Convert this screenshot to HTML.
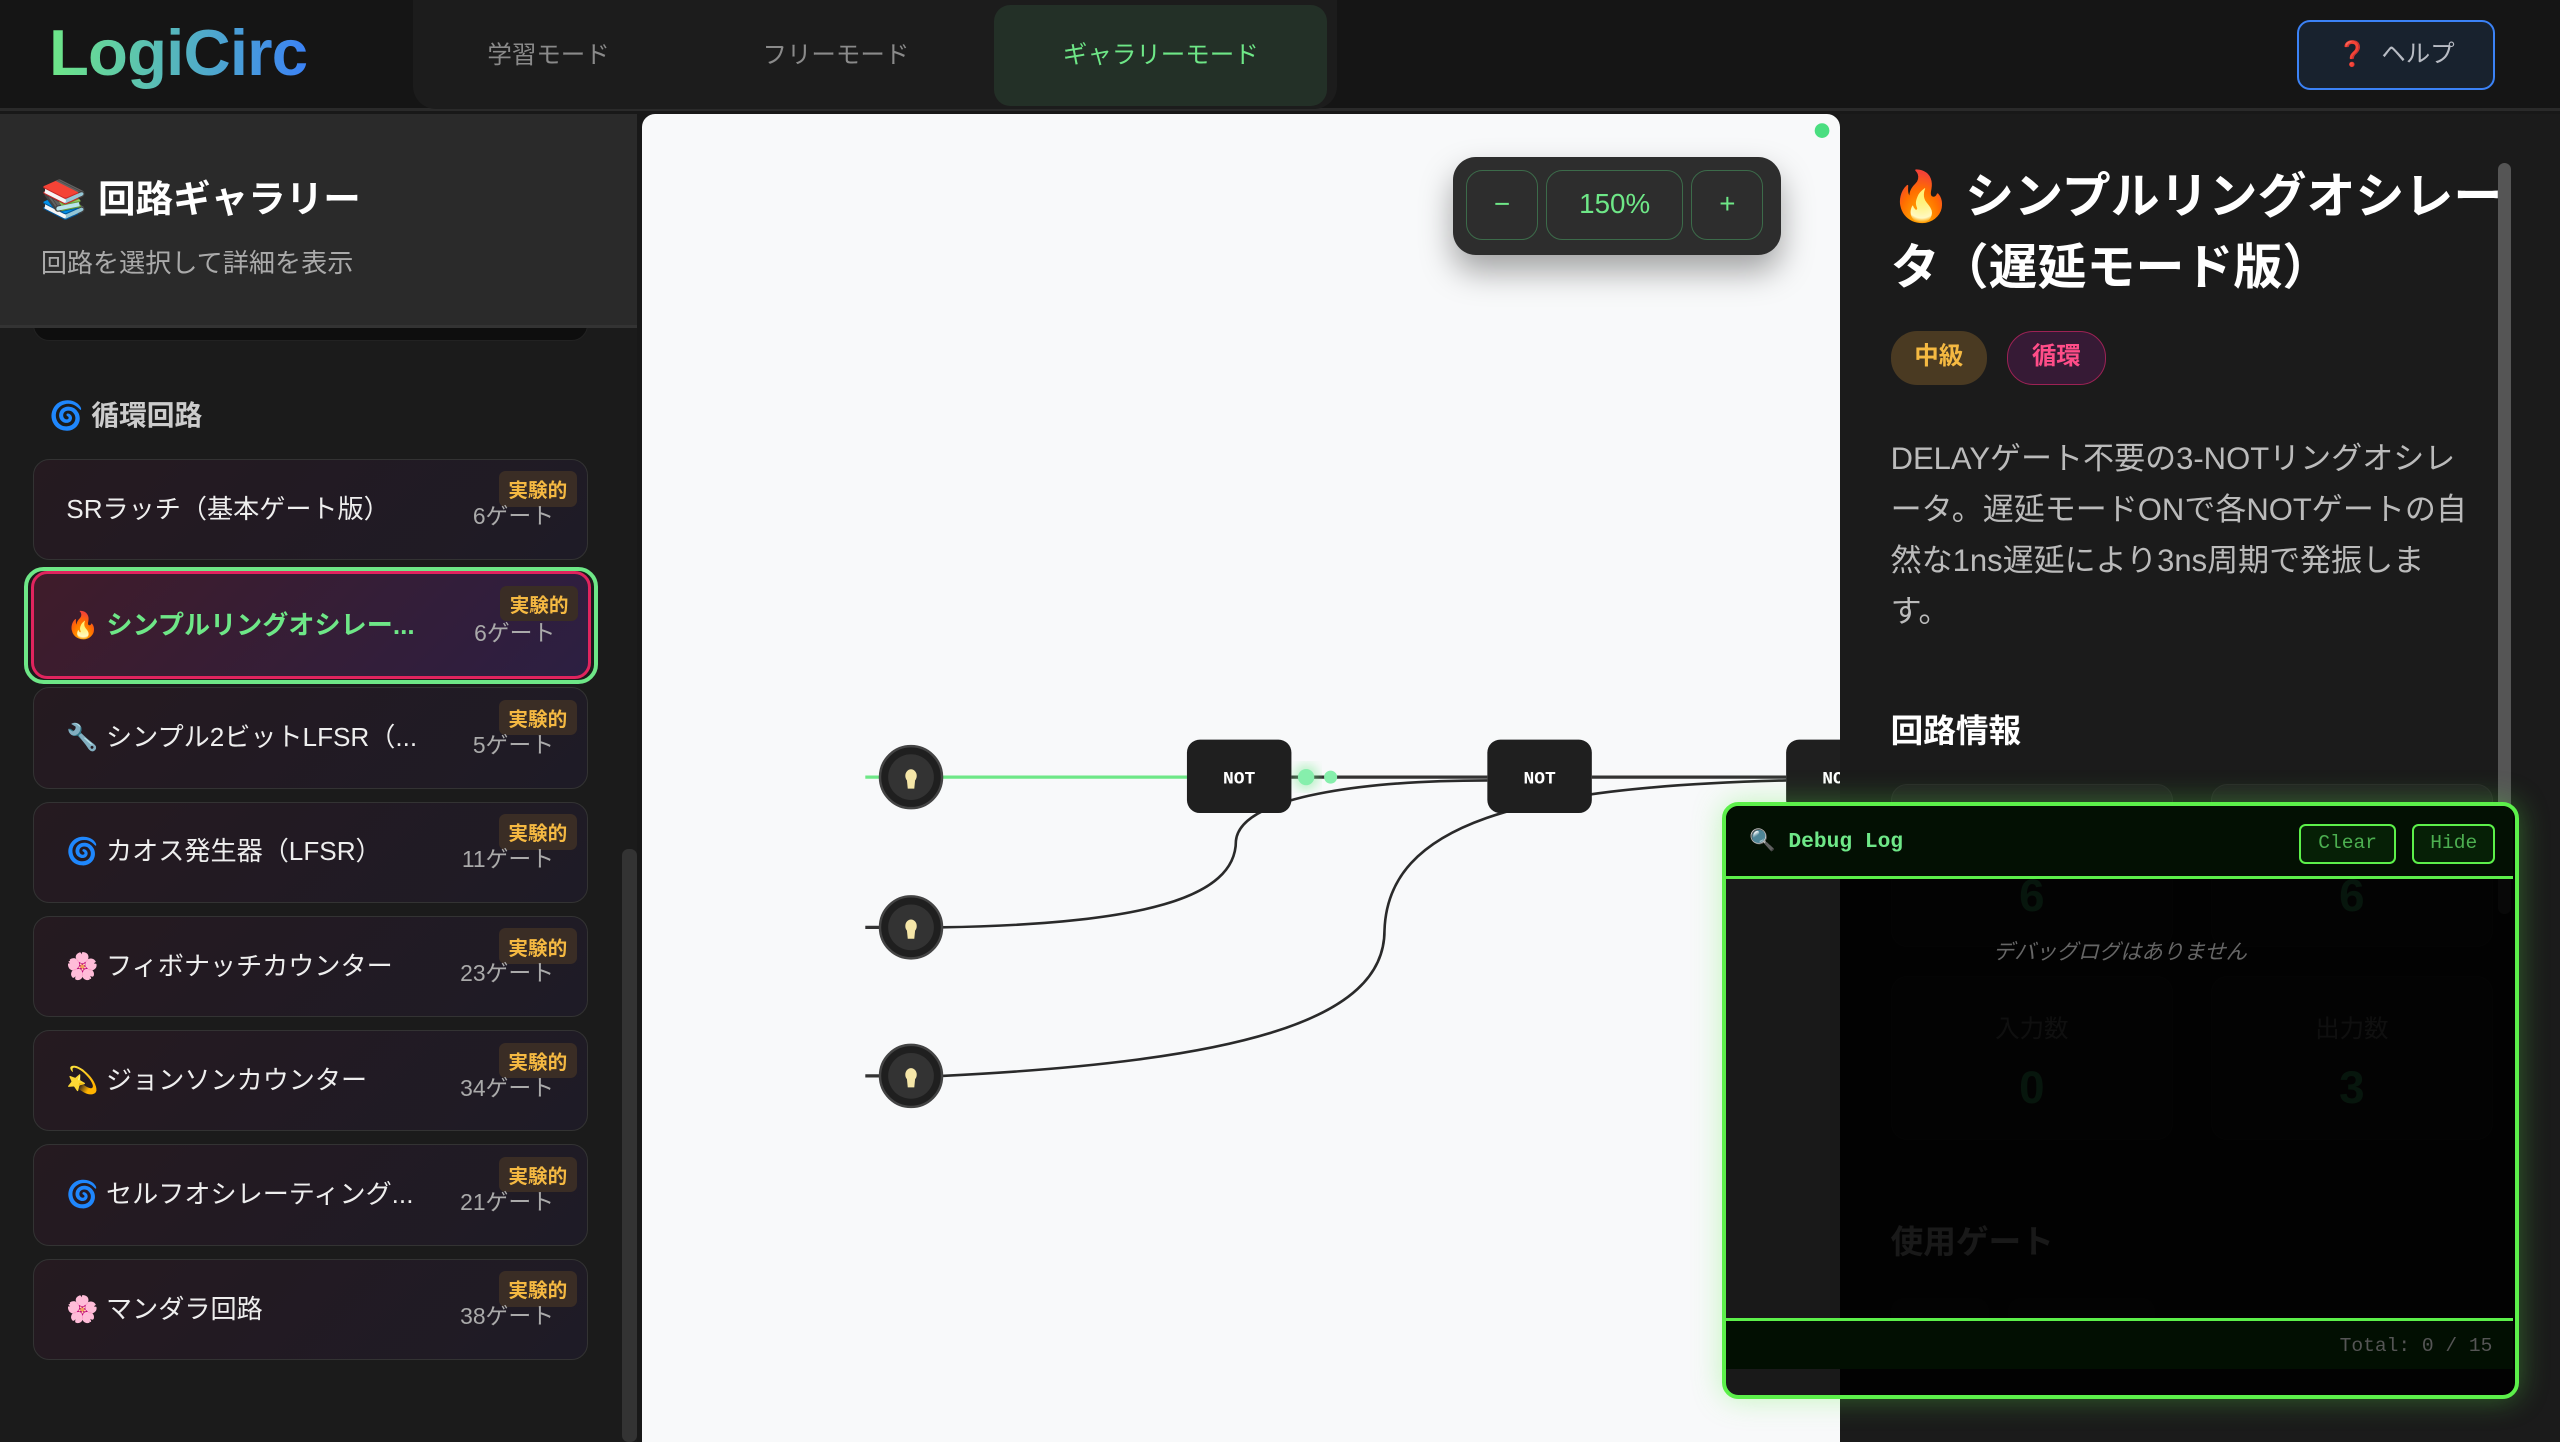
<!DOCTYPE html>
<html><head><meta charset="utf-8">
<style>
html{zoom:1.63265}
*{box-sizing:border-box;margin:0;padding:0}
body{width:1568px;height:883px;overflow:hidden;background:#181818;font-family:"Liberation Sans","Noto Sans CJK JP",sans-serif;position:relative;color:#fff}
.abs{position:absolute}
.header{left:0;top:0;width:1568px;height:68px;background:#151515;border-bottom:2px solid #2a2a2a}
.logo{left:30px;top:9px;font-size:40px;font-weight:bold;letter-spacing:-0.5px;background:linear-gradient(90deg,#6ee787,#3b82f6);-webkit-background-clip:text;color:transparent}
.nav{left:253px;top:0;width:566px;height:67px;background:#1c1c1c;border-radius:0 0 14px 14px}
.tab{top:3px;height:62px;line-height:62px;font-size:15px;color:#8a8a8a;text-align:center}
.help{left:1407px;top:12px;width:121px;height:43px;border:1.5px solid #3b82f6;border-radius:8px;background:#18222e;color:#b8bcc4;font-size:15px;text-align:center;line-height:40px}
.side{left:0;top:70px;width:390px;height:813px;background:#1b1b1b}
.card{left:20px;width:340px;height:62px;border:1px solid #333;border-radius:10px;background:linear-gradient(135deg,#251a20,#1e1b26)}
.card .t{position:absolute;left:20px;top:17px;font-size:16px;color:#eee;white-space:nowrap}
.card .b{position:absolute;right:6px;top:7px;background:#3a2d25;color:#f5b942;font-size:12px;font-weight:bold;padding:2px 6px;border-radius:4px}
.card .g{position:absolute;right:20px;top:23px;font-size:14px;color:#aaa}
.canvas{left:393px;top:70px;width:734px;height:813px;background:#f8f9fa;border-radius:8px 8px 0 0}
.zb{top:8px;height:43px;border:1px solid #3c6b4a;border-radius:10px;color:#6ee787;text-align:center;line-height:41px;font-size:17px}
.right{left:1127px;top:70px;width:441px;height:813px;background:#1b1b1b}
.st{position:absolute;width:173px;height:100px;border:1px solid #2a2a2a;border-radius:10px;background:#222}
.st .l{position:absolute;width:100%;text-align:center;top:20px;font-size:15px;color:#999}
.st .v{position:absolute;width:100%;text-align:center;top:52px;font-size:28px;font-weight:bold;color:#4ade80}
.mono{font-family:"Liberation Mono",monospace}
</style></head><body>
<div class="abs header"></div>
<div class="abs logo">LogiCirc</div>
<div class="abs nav"></div>
<div class="abs tab" style="left:270px;width:132px">学習モード</div>
<div class="abs tab" style="left:440px;width:144px">フリーモード</div>
<div class="abs tab" style="left:609px;width:204px;background:#233027;border-radius:10px;color:#6ee787">ギャラリーモード</div>
<div class="abs help"><span style="color:#e0245e">❓</span>&nbsp; ヘルプ</div>

<div class="abs side"></div>
<div class="abs" style="left:20px;top:180px;width:340px;height:29px;background:#0e0e0e;border-radius:0 0 10px 10px;border:1px solid #222"></div>
<div class="abs" style="left:0;top:70px;width:390px;height:131px;background:#2a2a2a;border-bottom:2px solid #333"></div>
<div class="abs" style="left:25px;top:103px;font-size:23px;font-weight:bold">📚 回路ギャラリー</div>
<div class="abs" style="left:25px;top:148px;font-size:16px;color:#aaa">回路を選択して詳細を表示</div>
<div class="abs" style="left:381px;top:520px;width:9px;height:363px;background:#333;border-radius:4px"></div>
<div class="abs" style="left:30px;top:241px;font-size:17px;font-weight:bold;color:#ccc">🌀 循環回路</div>

<div class="abs card" style="top:281px"><div class="t">SRラッチ（基本ゲート版）</div><div class="b">実験的</div><div class="g">6ゲート</div></div>
<div class="abs" style="left:15px;top:347px;width:351px;height:72px;border:3px solid #6ee787;border-radius:12px"></div>
<div class="abs card" style="top:350px;left:19px;width:343px;height:66px;border:2px solid #e0245e;background:linear-gradient(135deg,#3f1c2a,#2c1f42)"><div class="t" style="color:#6ee787;font-weight:bold;top:18px">🔥 シンプルリングオシレー...</div><div class="b">実験的</div><div class="g" style="top:24px">6ゲート</div></div>
<div class="abs card" style="top:421px"><div class="t">🔧 シンプル2ビットLFSR（...</div><div class="b">実験的</div><div class="g">5ゲート</div></div>
<div class="abs card" style="top:491px"><div class="t">🌀 カオス発生器（LFSR）</div><div class="b">実験的</div><div class="g">11ゲート</div></div>
<div class="abs card" style="top:561px"><div class="t">🌸 フィボナッチカウンター</div><div class="b">実験的</div><div class="g">23ゲート</div></div>
<div class="abs card" style="top:631px"><div class="t">💫 ジョンソンカウンター</div><div class="b">実験的</div><div class="g">34ゲート</div></div>
<div class="abs card" style="top:701px"><div class="t">🌀 セルフオシレーティング...</div><div class="b">実験的</div><div class="g">21ゲート</div></div>
<div class="abs card" style="top:771px"><div class="t">🌸 マンダラ回路</div><div class="b">実験的</div><div class="g">38ゲート</div></div>

<div class="abs canvas"></div>
<svg class="abs" style="left:0;top:0" width="1127" height="883">
<defs><filter id="gl"><feGaussianBlur stdDeviation="3"/></filter></defs>
<line x1="530" y1="476" x2="727" y2="476" stroke="#6ee787" stroke-width="6" opacity="0.4" filter="url(#gl)"/>
<line x1="530" y1="476" x2="727" y2="476" stroke="#6ee787" stroke-width="2"/>
<line x1="530" y1="568" x2="540" y2="568" stroke="#333" stroke-width="2"/>
<line x1="530" y1="659" x2="540" y2="659" stroke="#333" stroke-width="2"/>
<line x1="791" y1="476" x2="911" y2="476" stroke="#333" stroke-width="2"/>
<line x1="975" y1="476" x2="1094" y2="476" stroke="#333" stroke-width="2"/>
<path d="M577,568 C700,566 757,550 757,515 C760,485 850,478 911,478" fill="none" stroke="#2a2a2a" stroke-width="1.6"/>
<path d="M577,659 C760,650 848,625 848,570 C850,505 930,482 1094,478" fill="none" stroke="#2a2a2a" stroke-width="1.6"/>
<circle cx="800" cy="476" r="8" fill="#6ee787" opacity="0.4" filter="url(#gl)"/>
<circle cx="800" cy="476" r="5" fill="#86efac"/>
<circle cx="815" cy="476" r="4" fill="#86efac"/>
<g id="in">
<circle cx="558" cy="476" r="19" fill="#1f1f1f" stroke="#444" stroke-width="1.5"/>
<circle cx="558" cy="476" r="14" fill="#333"/>
<path d="M555.5,478 a3.5,4 0 1 1 5,0 l-0.5,5 h-4 z" fill="#f5e6a8"/>
</g>
<use href="#in" y="92"/><use href="#in" y="183"/>
<g font-family="Liberation Mono,monospace" font-weight="bold" font-size="11" fill="#fff" text-anchor="middle">
<rect x="727" y="453" width="64" height="45" rx="8" fill="#1f1f1f"/><text x="759" y="480">NOT</text>
<rect x="911" y="453" width="64" height="45" rx="8" fill="#1f1f1f"/><text x="943" y="480">NOT</text>
<rect x="1094" y="453" width="64" height="45" rx="8" fill="#1f1f1f"/><text x="1126" y="480">NOT</text>
</g>
<circle cx="1116" cy="80" r="4.5" fill="#4ade80"/>
</svg>
<div class="abs" style="left:890px;top:96px;width:201px;height:60px;background:#2d2d2d;border-radius:14px;box-shadow:0 10px 20px rgba(0,0,0,0.35)">
<div class="abs zb" style="left:8px;width:44px">−</div>
<div class="abs zb" style="left:57px;width:84px">150%</div>
<div class="abs zb" style="left:146px;width:44px">+</div>
</div>

<div class="abs right"></div>
<div class="abs" style="left:1530px;top:100px;width:8px;height:460px;background:#555;border-radius:4px"></div>
<div class="abs" style="left:1158px;top:99px;width:400px;font-size:30px;font-weight:bold;line-height:44px;white-space:nowrap">🔥 シンプルリングオシレー<br>タ（遅延モード版）</div>
<div class="abs" style="left:1158px;top:203px;width:59px;height:33px;background:#4a3a22;border-radius:16px;color:#f5b942;font-size:15px;font-weight:bold;text-align:center;line-height:32px">中級</div>
<div class="abs" style="left:1229px;top:203px;width:61px;height:33px;background:#361a35;border:1px solid #9d2255;border-radius:16px;color:#ff4d88;font-size:15px;font-weight:bold;text-align:center;line-height:31px">循環</div>
<div class="abs" style="left:1158px;top:265px;width:362px;font-size:19px;line-height:31.3px;color:#bbb">DELAYゲート不要の3-NOTリングオシレータ。遅延モードONで各NOTゲートの自然な1ns遅延により3ns周期で発振します。</div>
<div class="abs" style="left:1158px;top:432px;font-size:20px;font-weight:bold">回路情報</div>
<div class="st" style="left:1158px;top:480px"><div class="l">ゲート数</div><div class="v">6</div></div>
<div class="st" style="left:1354px;top:480px"><div class="l">ワイヤ数</div><div class="v">6</div></div>
<div class="st" style="left:1158px;top:598px"><div class="l">入力数</div><div class="v">0</div></div>
<div class="st" style="left:1354px;top:598px"><div class="l">出力数</div><div class="v">3</div></div>
<div class="abs" style="left:1158px;top:745px;font-size:20px;font-weight:bold">使用ゲート</div>
<div class="abs" style="left:1158px;top:795px;width:60px;height:40px;background:#222;border-radius:8px"></div>
<div class="abs" style="left:1230px;top:795px;width:90px;height:40px;background:#222;border-radius:8px"></div>

<div class="abs" style="left:1055px;top:491px;width:488px;height:366px;border:3px solid #5cf04a;border-radius:10px;background:rgba(0,0,0,0.9);box-shadow:0 0 18px rgba(92,240,74,0.35);overflow:hidden">
<div class="abs" style="left:0;top:0;width:482px;height:45px;background:#031003;border-bottom:2px solid #5cf04a"></div>
<div class="abs mono" style="left:14px;top:14px;font-size:13px;font-weight:bold;color:#6ee787">🔍 Debug Log</div>
<div class="abs mono" style="left:351px;top:11px;width:59px;height:25px;border:1.5px solid #5cf04a;border-radius:4px;color:#4caf50;font-size:12px;text-align:center;line-height:22px;background:#062006">Clear</div>
<div class="abs mono" style="left:420px;top:11px;width:51px;height:25px;border:1.5px solid #5cf04a;border-radius:4px;color:#4caf50;font-size:12px;text-align:center;line-height:22px;background:#062006">Hide</div>
<div class="abs" style="left:0;top:79px;width:482px;text-align:center;font-size:13px;font-style:italic;color:#666">デバッグログはありません</div>
<div class="abs" style="left:0;top:314px;width:482px;height:31px;background:#020f02;border-top:2px solid #5cf04a"></div>
<div class="abs mono" style="right:14px;top:324px;font-size:12px;color:#555">Total: 0 / 15</div>
</div>
</body></html>
